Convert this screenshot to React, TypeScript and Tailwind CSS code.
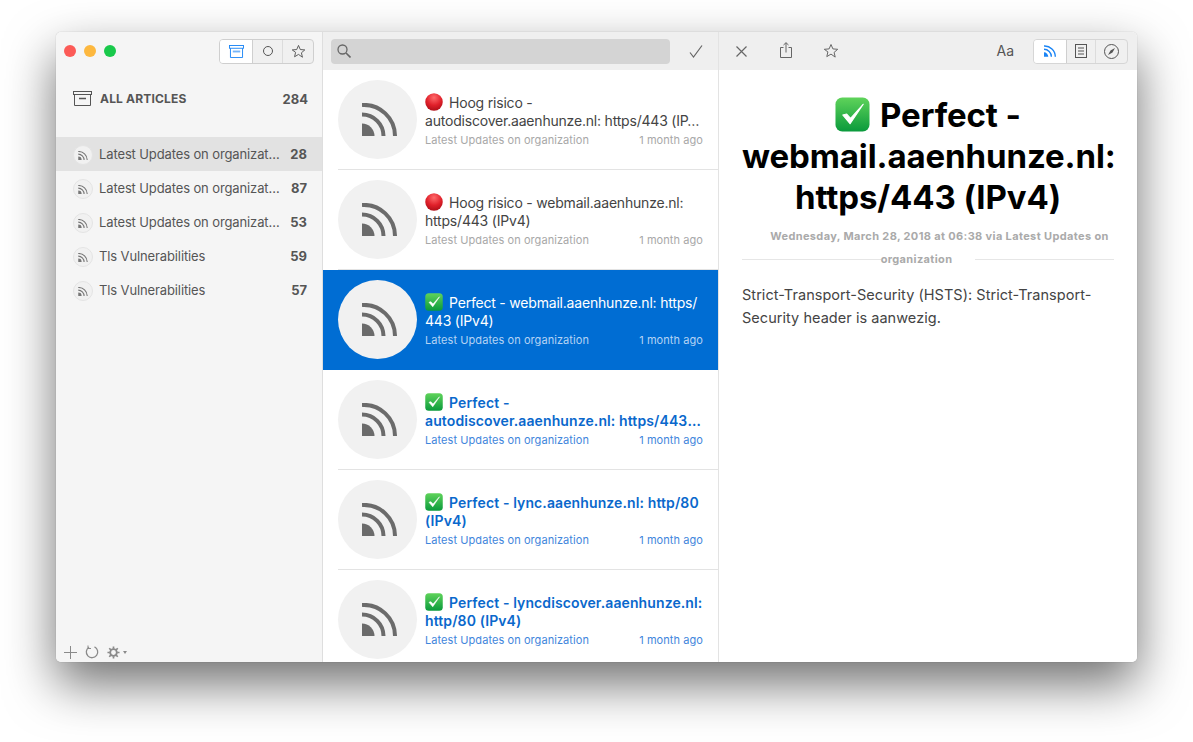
import { Fragment } from "react";

function Rss({ className = "" }: { className?: string }) {
  return (
    <svg viewBox="0 0 35 33" className={className} fill="none">
      <path d="M0 33V20.5A12.5 12.5 0 0 1 12.5 33Z" fill="currentColor" />
      <path d="M0 11.5A21.5 21.5 0 0 1 21.5 33" stroke="currentColor" strokeWidth="4" />
      <path d="M0 2A31 31 0 0 1 33 33" stroke="currentColor" strokeWidth="4" />
    </svg>
  );
}

function Check({ className = "" }: { className?: string }) {
  return (
    <svg viewBox="0 0 36 36" className={className}>
      <defs>
        <linearGradient id="chk" x1="0" y1="0" x2="0" y2="1">
          <stop offset="0" stopColor="#5fd35a" />
          <stop offset="1" stopColor="#0a9a3c" />
        </linearGradient>
      </defs>
      <rect x="0.5" y="0.5" width="35" height="35" rx="7" fill="url(#chk)" />
      <path d="M8 18.5l7.5 9L29 7.5l-13 14.5-4-4.5z" fill="#fff" stroke="#fff" strokeWidth="1.2" strokeLinejoin="round" />
    </svg>
  );
}

function Dot({ className = "" }: { className?: string }) {
  return (
    <svg viewBox="0 0 36 36" className={className}>
      <defs>
        <radialGradient id="dot" cx="0.5" cy="0.25" r="0.8">
          <stop offset="0" stopColor="#ff6a6a" />
          <stop offset="0.55" stopColor="#e0202a" />
          <stop offset="1" stopColor="#a80d16" />
        </radialGradient>
      </defs>
      <circle cx="18" cy="18" r="17.5" fill="url(#dot)" />
    </svg>
  );
}

function Star({ className = "" }: { className?: string }) {
  return (
    <svg viewBox="0 0 16 16" className={className} fill="none" stroke="currentColor" strokeWidth="1">
      <path d="M8 1.5l1.9 4.4 4.8.4-3.6 3.1 1.1 4.7L8 11.1l-4.2 2.5 1.1-4.7L1.3 6.3l4.8-.4z" strokeLinejoin="round" />
    </svg>
  );
}

const feeds = [
  { name: "Latest Updates on organization", n: 28 },
  { name: "Latest Updates on organization", n: 87 },
  { name: "Latest Updates on organization", n: 53 },
  { name: "Tls Vulnerabilities", n: 59 },
  { name: "Tls Vulnerabilities", n: 57 },
];

const articles = [
  { mark: "dot", title: ["Hoog risico - autodiscover.aaenhunze.nl: https/443 (IP…"], state: "read" },
  { mark: "dot", title: ["Hoog risico - webmail.aaenhunze.nl: https/443 (IPv4)"], state: "read" },
  { mark: "check", title: ["Perfect - webmail.aaenhunze.nl: https/", "443 (IPv4)"], state: "active" },
  { mark: "check", title: ["Perfect - autodiscover.aaenhunze.nl: https/443 (IPv4)"], state: "unread" },
  { mark: "check", title: ["Perfect - lync.aaenhunze.nl: http/80 (IPv4)"], state: "unread" },
  { mark: "check", title: ["Perfect - lyncdiscover.aaenhunze.nl: http/80 (IPv4)"], state: "unread" },
];

function ArticleRow({ a }: { a: (typeof articles)[number] }) {
  const active = a.state === "active";
  const unread = a.state === "unread";
  return (
    <div className={`h-[100px] shrink-0 pl-[15px] ${active ? "bg-[#006dd3]" : ""}`}>
      <div className={`flex h-full items-center border-b pr-[15px] ${active ? "border-transparent" : "border-[#e3e3e3]"}`}>
        <div className="flex h-[79px] w-[79px] shrink-0 items-center justify-center rounded-full bg-[#f1f1f1] text-[#6b6b6b]">
          <Rss className="ml-[4px] h-[33px] w-[35px]" />
        </div>
        <div className="ml-[8px] min-w-0 flex-1 pt-[2px]">
          <div
            className={`line-clamp-2 text-[14px] leading-[18px] ${
              active
                ? "tracking-[-0.2px] text-white"
                : unread
                  ? "font-semibold tracking-[0.11px] text-[#0a68cc]"
                  : "tracking-[-0.2px] text-[#444]"
            }`}
          >
            {a.mark === "dot" ? (
              <Dot className="mr-[6px] inline-block h-[18px] w-[18px] align-[-3px]" />
            ) : (
              <Check className="mr-[6px] inline-block h-[18px] w-[18px] align-[-3px]" />
            )}
            {a.title.map((part, i) => (
              <Fragment key={i}>
                {i > 0 && <wbr />}
                {part}
              </Fragment>
            ))}
          </div>
          <div
            className={`mt-[3px] flex justify-between text-[11px] leading-[15px] tracking-[0.07px] ${
              active ? "text-[#b5d3f3]" : unread ? "text-[#3f86dc]" : "text-[#a8a8a8]"
            }`}
          >
            <span>Latest Updates on organization</span>
            <span>1 month ago</span>
          </div>
        </div>
      </div>
    </div>
  );
}

function Sidebar() {
  return (
    <div className="flex w-[267px] shrink-0 flex-col border-r border-[#dedede] bg-[#f5f5f5]">
      <div className="flex h-[38px] shrink-0 items-center pl-[8px] pr-[8px]">
        <div className="flex gap-[8px]">
          <span className="h-[12px] w-[12px] rounded-full bg-[#fc5b57]" />
          <span className="h-[12px] w-[12px] rounded-full bg-[#fdb83f]" />
          <span className="h-[12px] w-[12px] rounded-full bg-[#19c94b]" />
        </div>
        <div className="ml-auto flex h-[25px] w-[95px] overflow-hidden rounded-[4px] border border-[#cfcfcf] bg-[#f0f0f0]">
          <div className="flex w-[32px] items-center justify-center bg-white text-[#1a84f5]">
            <svg viewBox="0 0 16 14" className="h-[13px] w-[15px]" fill="none" stroke="currentColor" strokeWidth="1">
              <rect x="0.5" y="0.5" width="15" height="3" />
              <path d="M1.5 3.5v10h13v-10" />
              <rect x="4" y="6" width="8" height="2" fill="currentColor" stroke="none" opacity="0.6" />
            </svg>
          </div>
          <div className="flex w-[30px] items-center justify-center border-l border-[#cfcfcf]">
            <span className="h-[10px] w-[10px] rounded-full border border-[#555]" />
          </div>
          <div className="flex flex-1 items-center justify-center border-l border-[#dcdcdc] text-[#555]">
            <Star className="h-[15px] w-[15px]" />
          </div>
        </div>
      </div>
      <div className="flex h-[67px] shrink-0 items-start pl-[17px] pr-[14px] pt-[21px]">
        <svg viewBox="0 0 19 15" className="h-[15px] w-[19px] text-[#555]" fill="none" stroke="currentColor" strokeWidth="1">
          <rect x="0.5" y="0.5" width="18" height="3" />
          <path d="M1.5 3.5v11h16v-11" />
          <path d="M6 7.5h7" strokeWidth="1.4" />
        </svg>
        <span className="ml-[8px] text-[12px] font-bold leading-[15px] tracking-[0.18px] text-[#555]">ALL ARTICLES</span>
        <span className="ml-auto text-[13px] font-bold leading-[17px] text-[#555]">284</span>
      </div>
      <div className="flex flex-col">
        {feeds.map((f, i) => (
          <div key={i} className={`flex h-[34px] items-center pl-[17px] pr-[15px] pt-[2px] ${i === 0 ? "bg-[#e2e2e2]" : ""}`}>
            <div className="flex h-[20px] w-[20px] shrink-0 items-center justify-center rounded-full border border-[#e4e4e4] bg-[#f1f1f1] text-[#777]">
              <Rss className="h-[9px] w-[10px]" />
            </div>
            <span className="ml-[6px] w-[182px] truncate text-[13px] tracking-[-0.12px] text-[#555]">{f.name}</span>
            <span className="ml-auto text-[13px] font-bold text-[#555]">{f.n}</span>
          </div>
        ))}
      </div>
      <div className="mt-auto flex h-[20px] items-center gap-[8px] pl-[8px] text-[#8a8a8a]">
        <svg viewBox="0 0 13 13" className="h-[13px] w-[13px]" stroke="currentColor" strokeWidth="1">
          <path d="M6.5 0v13M0 6.5h13" />
        </svg>
        <svg viewBox="0 0 14 14" className="h-[14px] w-[14px]" fill="none" stroke="currentColor" strokeWidth="1.3">
          <path d="M4 2.2A5.7 5.7 0 1 0 9.5 1.9" />
          <path d="M3 0.5v3h3" strokeWidth="1" />
        </svg>
        <div className="flex items-center gap-[3px]">
          <svg viewBox="0 0 14 14" className="h-[13px] w-[13px]" fill="none" stroke="currentColor">
            <circle cx="7" cy="7" r="3.6" strokeWidth="2" />
            <path d="M7 0.5v2.5M7 11v2.5M0.5 7h2.5M11 7h2.5M2.4 2.4l1.8 1.8M9.8 9.8l1.8 1.8M2.4 11.6l1.8-1.8M9.8 4.2l1.8-1.8" strokeWidth="1.8" />
          </svg>
          <span className="h-0 w-0 border-x-[2.5px] border-t-[3px] border-x-transparent border-t-[#8a8a8a]" />
        </div>
      </div>
    </div>
  );
}

function ArticleList() {
  return (
    <div className="flex w-[396px] shrink-0 flex-col border-r border-[#e3e3e3] bg-white">
      <div className="flex h-[38px] shrink-0 items-center bg-[#efefef] pl-[8px] pr-[15px]">
        <div className="flex h-[25px] w-[339px] items-center rounded-[4px] bg-[#d4d4d4] pl-[6px] text-[#666]">
          <svg viewBox="0 0 14 14" className="h-[14px] w-[14px]" fill="none" stroke="currentColor" strokeWidth="1.3">
            <circle cx="5.5" cy="5.5" r="4.5" />
            <path d="M9 9l4.5 4.5" strokeWidth="1.6" />
          </svg>
        </div>
        <svg viewBox="0 0 14 13" className="ml-auto h-[13px] w-[14px] text-[#666]" fill="none" stroke="currentColor" strokeWidth="1.2">
          <path d="M1 7.5l3.5 4.5L13 .5" />
        </svg>
      </div>
      <div className="flex min-h-0 flex-1 flex-col overflow-hidden">
        {articles.map((a, i) => (
          <ArticleRow key={i} a={a} />
        ))}
      </div>
    </div>
  );
}

function Reader() {
  return (
    <div className="flex min-w-0 flex-1 flex-col bg-white">
      <div className="flex h-[38px] shrink-0 items-center bg-[#efefef] pl-[17px] pr-[9px] text-[#666]">
        <svg viewBox="0 0 11 11" className="h-[11px] w-[11px]" stroke="currentColor" strokeWidth="1.2">
          <path d="M.5.5l10 10M10.5.5l-10 10" />
        </svg>
        <svg viewBox="0 0 12 16" className="mb-[2px] ml-[33px] h-[16px] w-[12px]" fill="none" stroke="currentColor" strokeWidth="1">
          <path d="M3.5 5.5h-3v10h11v-10h-3M6 10.5V.8M3.5 3L6 .7 8.5 3" />
        </svg>
        <Star className="ml-[31px] h-[16px] w-[16px]" />
        <span className="ml-auto text-[14px] leading-none text-[#555]">Aa</span>
        <div className="ml-[19px] flex h-[25px] w-[95px] overflow-hidden rounded-[4px] border border-[#d6d6d6] bg-[#f0f0f0]">
          <div className="flex w-[32px] items-center justify-center bg-white text-[#1a84f5]">
            <Rss className="h-[12px] w-[12px]" />
          </div>
          <div className="flex w-[29px] items-center justify-center border-l border-[#cfcfcf] text-[#555]">
            <svg viewBox="0 0 12 14" className="h-[14px] w-[12px]" fill="none" stroke="currentColor" strokeWidth="1">
              <rect x="0.5" y="0.5" width="11" height="13" />
              <path d="M3 4h6M3 7h6M3 10h6" />
            </svg>
          </div>
          <div className="flex flex-1 items-center justify-center border-l border-[#dcdcdc] text-[#555]">
            <svg viewBox="0 0 15 15" className="h-[15px] w-[15px]" fill="none" stroke="currentColor" strokeWidth="1">
              <circle cx="7.5" cy="7.5" r="7" />
              <path d="M11 4L8.5 8.5 4 11l2.5-4.5z" fill="currentColor" stroke="none" />
            </svg>
          </div>
        </div>
      </div>
      <div className="px-[23px] pt-[5px]">
        <h1 className="pt-[20px] text-center text-[33px] font-bold leading-[41px] tracking-[-0.1px] text-black">
          <Check className="mr-[10px] inline-block h-[35px] w-[35px] align-[-5px]" />
          Perfect - webmail.aaenhunze.nl: https/443 (IPv4)
        </h1>
        <div className="relative mt-[7px] text-center text-[11px] font-bold leading-[23px] tracking-[0.36px] text-[#aaaaaa]">
          <div className="absolute inset-x-0 top-[34px] h-px bg-[#e6e6e6]" />
          <span className="relative bg-white px-[23px]">
            Wednesday, March 28, 2018 at 06:38 via Latest Updates on organization
          </span>
        </div>
        <p className="mt-[12px] text-[14.5px] leading-[23px] tracking-[0.04px] text-[#444]">
          Strict-Transport-Security (HSTS): Strict-Transport-Security header is aanwezig.
        </p>
      </div>
    </div>
  );
}

export default function App() {
  return (
    <div className="h-[742px] overflow-hidden bg-white pl-[56px] pt-[32px] font-['Inter',sans-serif]">
      <div className="flex h-[630px] w-[1081px] overflow-hidden rounded-[5px] shadow-[0_22px_50px_0_rgba(0,0,0,0.56),0_0_1px_rgba(0,0,0,0.35)]">
        <Sidebar />
        <ArticleList />
        <Reader />
      </div>
    </div>
  );
}
